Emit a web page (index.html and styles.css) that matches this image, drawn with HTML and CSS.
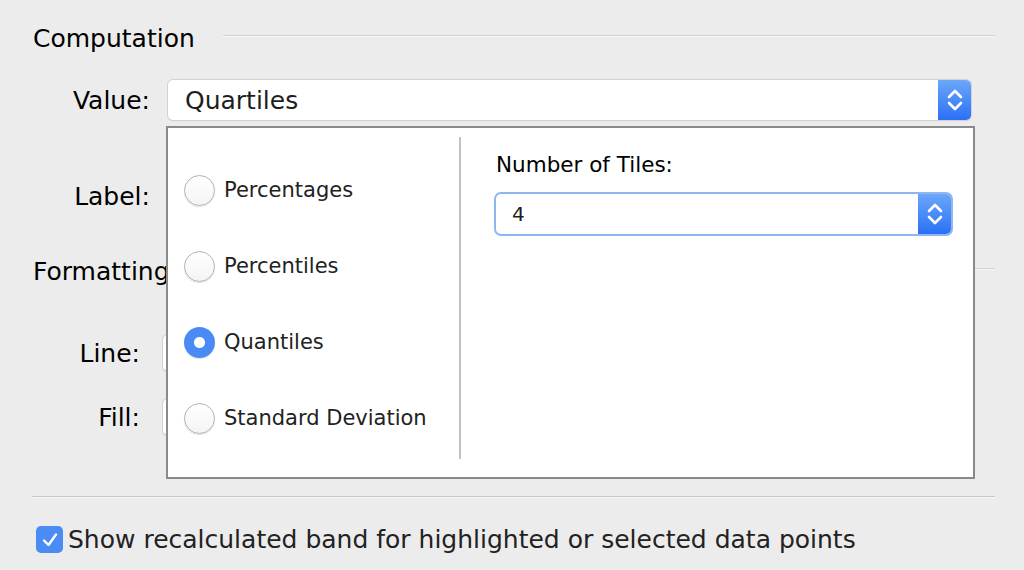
FILE: index.html
```html
<!DOCTYPE html>
<html lang="en">
<head>
  <meta charset="UTF-8" />
  <title>Reference Band</title>
  <link rel="stylesheet" href="styles.css">
</head>
<body>

<div class="pane">

  <div class="group-title">
    <span>Computation</span>
    <div class="rule"></div>
  </div>

  <div class="field">
    <label class="field-label">Value:</label>
    <div class="popup-button">
      <span class="popup-text">Quartiles</span>
      <span class="stepper">
        <svg width="18" height="26" viewBox="0 0 18 26"><path d="M3 10 L9 4 L15 10 M3 16 L9 22 L15 16" fill="none" stroke="#fff" stroke-width="2.6" stroke-linecap="round" stroke-linejoin="round"/></svg>
      </span>
    </div>
  </div>

  <div class="field field-label-row">
    <label class="field-label">Label:</label>
    <div class="popup-button plain"></div>
  </div>

  <div class="group-title formatting">
    <span>Formatting</span>
    <div class="rule"></div>
  </div>

  <div class="field field-line">
    <label class="field-label narrow">Line:</label>
    <div class="popup-button plain"></div>
  </div>

  <div class="field field-fill">
    <label class="field-label narrow">Fill:</label>
    <div class="popup-button plain"></div>
  </div>

  <div class="separator"></div>

  <label class="check-row">
    <span class="checkbox">
      <svg width="20" height="20" viewBox="0 0 20 20"><path d="M4 10.5 L8.5 15 L16 4.5" fill="none" stroke="#fff" stroke-width="2.4" stroke-linecap="round" stroke-linejoin="round"/></svg>
    </span>
    Show recalculated band for highlighted or selected data points
  </label>

  <!-- popover opened from the Value popup button -->
  <div class="popover">
    <div class="choices">
      <div class="radio-row"><span class="radio"></span>Percentages</div>
      <div class="radio-row"><span class="radio"></span>Percentiles</div>
      <div class="radio-row"><span class="radio on"></span>Quantiles</div>
      <div class="radio-row"><span class="radio"></span>Standard Deviation</div>
    </div>
    <div class="divider"></div>
    <div class="options">
      <div class="options-label">Number of Tiles:</div>
      <div class="popup-button focused">
        <span class="popup-text small">4</span>
        <span class="stepper">
          <svg width="18" height="26" viewBox="0 0 18 26"><path d="M3 10 L9 4 L15 10 M3 16 L9 22 L15 16" fill="none" stroke="#fff" stroke-width="2.6" stroke-linecap="round" stroke-linejoin="round"/></svg>
        </span>
      </div>
    </div>
  </div>

</div>

</body>
</html>
```

FILE: styles.css
```css
* {
  box-sizing: border-box;
}

body {
  margin: 0;
  background: #ececec;
  color: #000;
  font-family: "DejaVu Sans", "Liberation Sans", sans-serif;
  font-size: 25px;
}

.pane {
  position: relative;
  width: 1024px;
  height: 570px;
  padding: 21px 29px 0 33px;
}

.group-title {
  display: flex;
  align-items: center;
  gap: 28px;
  height: 34px;
  font-size: 25px;
}

.rule {
  flex: 1;
  height: 2px;
  border-top: 1px solid #cfcfcf;
  border-bottom: 1px solid #f8f8f8;
  margin-top: -4px;
}

.field {
  display: flex;
  align-items: center;
  margin-top: 25px;
  margin-right: 24px;
  height: 40px;
}

.field-label {
  width: 135px;
  text-align: right;
  padding-right: 18px;
}

.field-label.narrow {
  width: 130px;
  padding-right: 23px;
}

.popup-button {
  flex: 1;
  display: flex;
  align-items: center;
  height: 40px;
  background: #fff;
  border-radius: 5px;
  box-shadow: 0 0 0 1px #d2d2d2, 0 1px 1px #b8b8b8;
  overflow: hidden;
}

.popup-text {
  flex: 1;
  padding-left: 17px;
  color: #1e1e1e;
}

.popup-text.small {
  font-size: 20px;
  padding-left: 16px;
}

.stepper {
  width: 33px;
  height: 100%;
  display: flex;
  align-items: center;
  justify-content: center;
  background: linear-gradient(#6ca7f9, #2a70f6);
}

.field-label-row {
  margin-top: 56px;
}

.formatting {
  margin-top: 38px;
}

.field-line {
  margin-top: 47px;
  height: 36px;
}

.field-fill {
  margin-top: 28px;
  height: 36px;
}

.field-line .popup-button,
.field-fill .popup-button {
  height: 36px;
}

.separator {
  margin-top: 61px;
  height: 2px;
  border-top: 1px solid #c6c6c6;
  border-bottom: 1px solid #fafafa;
  margin-left: -1px;
}

.check-row {
  display: flex;
  align-items: center;
  gap: 5px;
  margin-top: 27px;
  margin-left: 3px;
  font-size: 25px;
  color: #222;
}

.checkbox {
  width: 27px;
  height: 27px;
  border-radius: 5px;
  background: #4b8bf5;
  display: flex;
  align-items: center;
  justify-content: center;
}

/* popover sits above the form */
.popover {
  position: absolute;
  left: 166px;
  top: 126px;
  width: 809px;
  height: 353px;
  background: #fff;
  border: 2px solid #8a8a8a;
  display: flex;
}

.choices {
  width: 291px;
  padding: 46px 0 0 16px;
  display: flex;
  flex-direction: column;
  gap: 44px;
}

.radio-row {
  display: flex;
  align-items: center;
  gap: 9px;
  height: 32px;
  font-size: 21px;
  color: #222;
}

.radio {
  width: 31px;
  height: 31px;
  border-radius: 50%;
  background: linear-gradient(#fff, #f4f4f4);
  border: 1px solid #b4b4b4;
  box-shadow: 0 1px 1px rgba(0,0,0,0.12);
}

.radio.on {
  border: none;
  background: radial-gradient(circle, #fff 0 5px, #4a8af4 6px);
}

.divider {
  width: 2px;
  margin: 9px 0 18px;
  background: #c2c2c2;
}

.options {
  flex: 1;
  padding: 22px 22px 0 35px;
}

.options-label {
  font-size: 21.5px;
  height: 30px;
  line-height: 30px;
}

.options .popup-button {
  margin-top: 14px;
  flex: none;
  height: 40px;
  margin-right: 0;
}

.popup-button.focused {
  box-shadow: 0 0 0 2px #8db7f2;
}
```
